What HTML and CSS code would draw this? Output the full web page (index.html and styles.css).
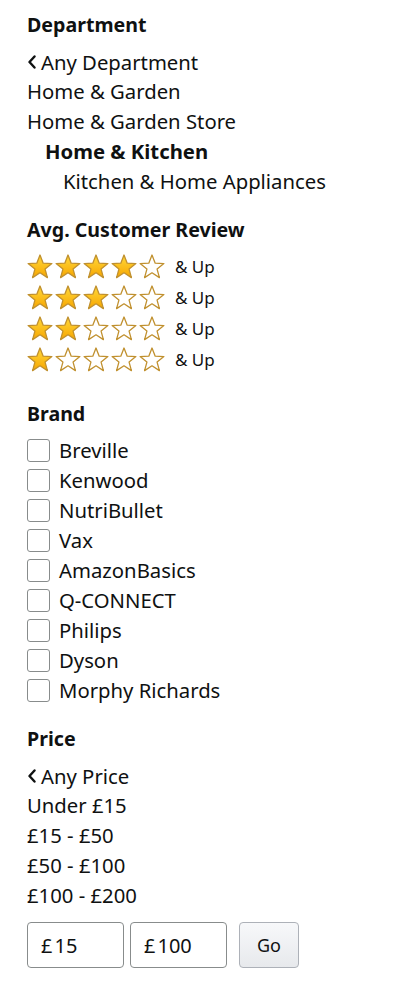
FILE: index.html
```html
<!DOCTYPE html>
<html lang="en">
<head>
    <meta charset="UTF-8">
    <meta name="viewport" content="width=device-width, initial-scale=1.0">
    <title>Refine results</title>
    <link rel="stylesheet" href="styles.css">
</head>
<body>
    <svg class="defs" width="0" height="0" aria-hidden="true">
        <defs>
            <linearGradient id="gold" x1="0" y1="0" x2="0" y2="1">
                <stop offset="0" stop-color="#ffd93b"/>
                <stop offset="1" stop-color="#f7a600"/>
            </linearGradient>
            <symbol id="star-full" viewBox="0 0 26 25">
                <polygon points="13,1 16.2,9.2 24.9,9.6 18.1,15.1 20.4,23.6 13,18.8 5.6,23.6 7.9,15.1 1.1,9.6 9.8,9.2" fill="url(#gold)" stroke="#c0902e" stroke-width="1.3" stroke-linejoin="round"/>
            </symbol>
            <symbol id="star-empty" viewBox="0 0 26 25">
                <polygon points="13,1 16.2,9.2 24.9,9.6 18.1,15.1 20.4,23.6 13,18.8 5.6,23.6 7.9,15.1 1.1,9.6 9.8,9.2" fill="#fff" stroke="#c0902e" stroke-width="1.3" stroke-linejoin="round"/>
            </symbol>
            <symbol id="chevron" viewBox="0 0 10 14">
                <polyline points="7.5,1.5 2.5,7 7.5,12.5" fill="none" stroke="#0f1111" stroke-width="2.4" stroke-linecap="round" stroke-linejoin="round"/>
            </symbol>
        </defs>
    </svg>

    <div class="refinements">
        <section class="section">
            <h3 class="section-title">Department</h3>
            <ul class="link-list">
                <li><a class="back-link" href="#"><svg class="chevron"><use href="#chevron"/></svg>Any Department</a></li>
                <li><a href="#">Home &amp; Garden</a></li>
                <li><a href="#">Home &amp; Garden Store</a></li>
                <li class="level-1 current">Home &amp; Kitchen</li>
                <li class="level-2"><a href="#">Kitchen &amp; Home Appliances</a></li>
            </ul>
        </section>

        <section class="section reviews">
            <h3 class="section-title">Avg. Customer Review</h3>
            <ul class="star-list">
                <li>
                    <span class="stars">
                        <svg class="star"><use href="#star-full"/></svg><svg class="star"><use href="#star-full"/></svg><svg class="star"><use href="#star-full"/></svg><svg class="star"><use href="#star-full"/></svg><svg class="star"><use href="#star-empty"/></svg>
                    </span>
                    <span class="and-up">&amp; Up</span>
                </li>
                <li>
                    <span class="stars">
                        <svg class="star"><use href="#star-full"/></svg><svg class="star"><use href="#star-full"/></svg><svg class="star"><use href="#star-full"/></svg><svg class="star"><use href="#star-empty"/></svg><svg class="star"><use href="#star-empty"/></svg>
                    </span>
                    <span class="and-up">&amp; Up</span>
                </li>
                <li>
                    <span class="stars">
                        <svg class="star"><use href="#star-full"/></svg><svg class="star"><use href="#star-full"/></svg><svg class="star"><use href="#star-empty"/></svg><svg class="star"><use href="#star-empty"/></svg><svg class="star"><use href="#star-empty"/></svg>
                    </span>
                    <span class="and-up">&amp; Up</span>
                </li>
                <li>
                    <span class="stars">
                        <svg class="star"><use href="#star-full"/></svg><svg class="star"><use href="#star-empty"/></svg><svg class="star"><use href="#star-empty"/></svg><svg class="star"><use href="#star-empty"/></svg><svg class="star"><use href="#star-empty"/></svg>
                    </span>
                    <span class="and-up">&amp; Up</span>
                </li>
            </ul>
        </section>

        <section class="section">
            <h3 class="section-title">Brand</h3>
            <ul class="check-list">
                <li><label><span class="box"></span>Breville</label></li>
                <li><label><span class="box"></span>Kenwood</label></li>
                <li><label><span class="box"></span>NutriBullet</label></li>
                <li><label><span class="box"></span>Vax</label></li>
                <li><label><span class="box"></span>AmazonBasics</label></li>
                <li><label><span class="box"></span>Q-CONNECT</label></li>
                <li><label><span class="box"></span>Philips</label></li>
                <li><label><span class="box"></span>Dyson</label></li>
                <li><label><span class="box"></span>Morphy Richards</label></li>
            </ul>
        </section>

        <section class="section">
            <h3 class="section-title">Price</h3>
            <ul class="link-list">
                <li><a class="back-link" href="#"><svg class="chevron"><use href="#chevron"/></svg>Any Price</a></li>
                <li><a href="#">Under £15</a></li>
                <li><a href="#">£15 - £50</a></li>
                <li><a href="#">£50 - £100</a></li>
                <li><a href="#">£100 - £200</a></li>
            </ul>
            <form class="price-form" onsubmit="return false;">
                <div class="price-input"><span class="currency">£</span><input type="text" value="15"></div>
                <div class="price-input"><span class="currency">£</span><input type="text" value="100"></div>
                <button type="submit" class="go-button">Go</button>
            </form>
        </section>
    </div>
</body>
</html>
```

FILE: styles.css
```css
body {
    margin: 0;
    font-family: 'Noto Sans', 'Open Sans', sans-serif;
    color: #0f1111;
    background-color: #ffffff;
}

.defs {
    position: absolute;
}

.refinements {
    padding: 10px 0 0 27px;
}

.section {
    margin-bottom: 19px;
}

.section-title {
    margin: 0 0 6px;
    font-size: 19.6px;
    font-weight: 700;
    line-height: 30px;
}

ul {
    list-style: none;
    margin: 0;
    padding: 0;
}

.link-list li {
    font-size: 20.3px;
    line-height: 30px;
    height: 30px;
    white-space: nowrap;
}

.link-list a {
    color: #0f1111;
    text-decoration: none;
}

.back-link {
    display: inline-flex;
    align-items: center;
}

.chevron {
    width: 10px;
    height: 14px;
    margin-right: 4px;
}

.level-1 {
    padding-left: 18px;
}

.level-2 {
    padding-left: 36px;
}

.current {
    font-weight: 700;
}

.reviews {
    margin-bottom: 24px;
}

.section-title + .star-list {
    margin-top: 1px;
}

.star-list li {
    display: flex;
    align-items: center;
    height: 31px;
}

.stars {
    display: flex;
    gap: 2px;
}

.star {
    width: 26px;
    height: 25px;
}

.and-up {
    margin-left: 10px;
    font-size: 17px;
}

.check-list li {
    height: 30px;
    display: flex;
    align-items: center;
}

.check-list label {
    display: flex;
    align-items: center;
    font-size: 20.3px;
}

.box {
    width: 21px;
    height: 21px;
    border: 1px solid #888c8c;
    border-radius: 3px;
    margin-right: 9px;
    box-sizing: content-box;
}

.price-form {
    display: flex;
    align-items: center;
    margin-top: 12px;
}

.price-input {
    display: flex;
    align-items: center;
    width: 97px;
    height: 46px;
    box-sizing: border-box;
    border: 1px solid #888c8c;
    border-radius: 4px;
    padding-left: 13px;
    margin-right: 6px;
    font-size: 20px;
}

.currency {
    margin-right: 2px;
}

.price-input input {
    width: 60px;
    border: none;
    outline: none;
    padding: 0;
    font-family: inherit;
    font-size: 20px;
    color: #0f1111;
    background: transparent;
}

.go-button {
    margin-left: 6px;
    width: 60px;
    height: 46px;
    border: 1px solid #adb1b8;
    border-radius: 4px;
    background: linear-gradient(to bottom, #f7f8fa, #e7e9ec);
    font-family: inherit;
    font-size: 18px;
    color: #0f1111;
    cursor: pointer;
}
```
